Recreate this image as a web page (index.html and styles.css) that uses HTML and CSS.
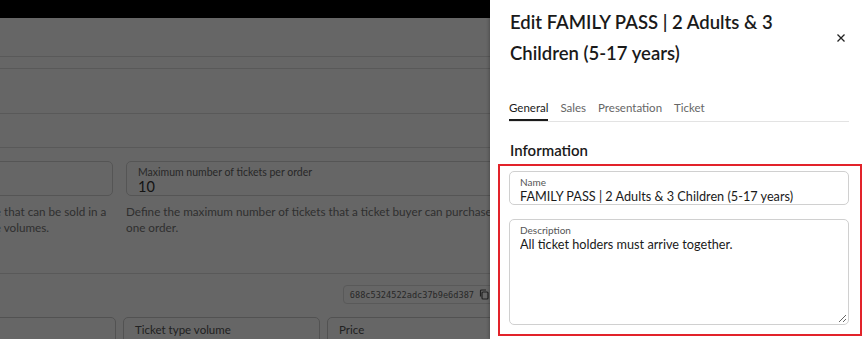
FILE: index.html
```html
<!DOCTYPE html>
<html lang="en">
<head>
    <meta charset="UTF-8">
    <meta name="viewport" content="width=device-width, initial-scale=1.0">
    <title>Edit ticket type</title>
    <link rel="stylesheet" href="styles.css">
</head>
<body>
    <div class="page">
        <div class="topbar"></div>
        <div class="page-head"></div>
        <div class="page-strip"></div>
        <div class="page-section tall"></div>
        <div class="page-section"></div>

        <div class="limits">
            <div class="limit">
                <div class="field"></div>
                <p class="hint nowrap">Define the maximum number of tickets of this ticket type that can be sold in a<br>single event, independently of all the different ticket type volumes.</p>
            </div>
            <div class="limit">
                <div class="field">
                    <span class="field-label">Maximum number of tickets per order</span>
                    <span class="field-value">10</span>
                </div>
                <p class="hint">Define the maximum number of tickets that a ticket buyer can purchase in one order.</p>
            </div>
        </div>

        <div class="meta">
            <span class="chip">688c5324522adc37b9e6d387
                <svg class="copy" width="10" height="11" viewBox="0 0 10 11"><rect x="3" y="3" width="6" height="7" rx="1" fill="none" stroke="#555" stroke-width="1.2"/><path d="M1.5 7.5V2a1 1 0 0 1 1-1H7" fill="none" stroke="#555" stroke-width="1.2"/></svg>
            </span>
        </div>

        <div class="volumes">
            <div class="field short"></div>
            <div class="field short"><span class="field-label">Ticket type volume</span></div>
            <div class="field short"><span class="field-label">Price</span></div>
        </div>
    </div>

    <div class="backdrop"></div>

    <aside class="drawer">
        <div class="drawer-head">
            <h2 class="drawer-title">Edit FAMILY PASS | 2 Adults &amp; 3 Children (5-17 years)</h2>
            <button class="close" aria-label="Close">
                <svg width="8" height="8" viewBox="0 0 8 8"><path d="M0.5 0.5L7.5 7.5M7.5 0.5L0.5 7.5" stroke="#222" stroke-width="1.3"/></svg>
            </button>
        </div>

        <nav class="tabs">
            <a class="tab active">General</a>
            <a class="tab">Sales</a>
            <a class="tab">Presentation</a>
            <a class="tab">Ticket</a>
        </nav>

        <h3 class="group-title">Information</h3>

        <div class="group highlight">
            <label class="box">
                <span class="box-label">Name</span>
                <input class="box-input" type="text" value="FAMILY PASS | 2 Adults &amp; 3 Children (5-17 years)">
            </label>
            <label class="box area">
                <span class="box-label">Description</span>
                <textarea class="box-input">All ticket holders must arrive together.</textarea>
            </label>
        </div>
    </aside>
</body>
</html>
```

FILE: styles.css
```css
html, body {
    margin: 0;
    padding: 0;
}
body {
    width: 865px;
    height: 339px;
    overflow: hidden;
    position: relative;
    background: #fff;
    font-family: Lato, "Noto Sans", sans-serif;
    color: #222;
}

/* page behind the drawer */
.page {
    width: 865px;
}
.topbar {
    height: 18px;
    background: #000;
}
.page-head {
    height: 38px;
    border-bottom: 1px solid #dedede;
}
.page-strip {
    height: 11px;
    border-bottom: 1px solid #dedede;
}
.page-section {
    height: 33px;
    border-bottom: 1px solid #dedede;
}
.page-section.tall {
    height: 44px;
}
.limits {
    display: grid;
    grid-template-columns: 404px 395px;
    column-gap: 13px;
    margin: 13px 0 0 -291px;
    height: 112px;
    border-bottom: 1px solid #dedede;
}
.field {
    display: flex;
    flex-direction: column;
    box-sizing: border-box;
    height: 35px;
    padding: 4px 11px 0;
    border: 1px solid #d4d4d4;
    border-radius: 5px;
}
.field-label {
    font-size: 10.5px;
    line-height: 13px;
    color: #666;
}
.field-value {
    font-size: 14.5px;
    line-height: 15px;
    color: #333;
}
.hint {
    margin: 7px 0 0;
    font-size: 11.7px;
    line-height: 16px;
    color: #777;
}
.hint.nowrap {
    white-space: nowrap;
}
.meta {
    display: flex;
    justify-content: flex-end;
    width: 498px;
    padding-top: 11px;
}
.chip {
    display: flex;
    align-items: center;
    gap: 5px;
    height: 17px;
    padding: 0 8px 0 6px;
    border: 1px solid #dedede;
    border-radius: 4px;
    font-family: "DejaVu Sans Mono", monospace;
    font-size: 8.6px;
    color: #666;
}
.copy {
    display: block;
}
.volumes {
    display: grid;
    grid-template-columns: 300px 197px 300px;
    column-gap: 7px;
    margin: 13px 0 0 -184px;
}
.field.short {
    padding-top: 5px;
    border-color: #ccc;
}
.field.short .field-label {
    font-size: 11.5px;
    color: #555;
}

.backdrop {
    position: absolute;
    inset: 0;
    background: rgba(0, 0, 0, 0.6);
}

/* edit drawer */
.drawer {
    position: absolute;
    top: 0;
    right: 0;
    bottom: 0;
    width: 375px;
    box-sizing: border-box;
    padding: 0 16px 0 19px;
    background: #fff;
    box-shadow: -1px 0 3px rgba(0, 0, 0, 0.25);
}
.drawer-head {
    display: flex;
    align-items: center;
    justify-content: space-between;
    padding-top: 7px;
}
.drawer-title {
    margin: 0;
    width: 300px;
    padding-left: 1px;
    font-size: 18.5px;
    line-height: 31px;
    font-weight: 600;
    color: #1a1a1a;
}
.close {
    display: flex;
    padding: 0;
    margin-right: 4px;
    border: 0;
    background: none;
}
.tabs {
    display: flex;
    gap: 12px;
    margin-top: 31px;
    border-bottom: 1px solid #e3e3e3;
}
.tab {
    padding-bottom: 6px;
    font-size: 11.5px;
    line-height: 15px;
    color: #666;
}
.tab.active {
    color: #1a1a1a;
    box-shadow: inset 0 -2px 0 #1a1a1a;
}
.group-title {
    margin: 18px 0 0 1px;
    font-size: 15px;
    line-height: 20px;
    font-weight: 600;
    color: #1a1a1a;
}
.group {
    display: flex;
    flex-direction: column;
    gap: 14px;
}
.group.highlight {
    margin: 4px -13px 0 -11px;
    padding: 5px 11px 9px 9px;
    border: 2px solid #e2232a;
}
.box {
    display: flex;
    flex-direction: column;
    box-sizing: border-box;
    height: 34px;
    padding: 5px 1px 0 10px;
    border: 1px solid #d0d0d0;
    border-radius: 5px;
}
.box.area {
    height: 106px;
    padding-bottom: 1px;
}
.box-label {
    font-size: 10px;
    line-height: 11px;
    color: #555;
}
.box-input {
    margin: 0;
    padding: 0;
    border: 0;
    outline: none;
    background: none;
    font-family: inherit;
    font-size: 12.7px;
    line-height: 16px;
    color: #1a1a1a;
}
.area .box-input {
    flex: 1;
    resize: vertical;
}
```
